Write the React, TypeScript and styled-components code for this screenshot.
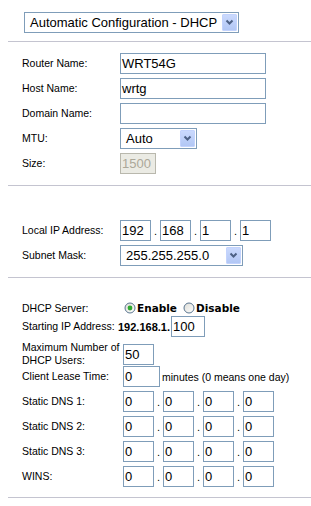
import React from 'react';
import styled, { createGlobalStyle } from 'styled-components';

const Global = createGlobalStyle`
  html, body { margin: 0; padding: 0; background: #fff; }
  body { font-family: "Liberation Sans", Arial, sans-serif; color: #000; }
`;

const Page = styled.div`
  width: 311px;
  height: 506px;
  overflow: hidden;
  background: #fff;
`;

const TopBar = styled.div`
  padding: 12px 0 8px 24px;
`;

const Divider = styled.div`
  margin-left: 8px;
  height: 1px;
  background: #c4c4d0;
`;

const Section = styled.div<{ $pt: number; $pb: number }>`
  padding: ${(p) => p.$pt}px 0 ${(p) => p.$pb}px 22px;
  display: flex;
  flex-direction: column;
`;

const Row = styled.div<{ $label: number; $h?: number; $after?: number }>`
  display: grid;
  grid-template-columns: ${(p) => p.$label}px 1fr;
  align-items: center;
  height: ${(p) => p.$h ?? 21}px;
  margin-bottom: ${(p) => p.$after ?? 4}px;
  &:last-child { margin-bottom: 0; }
`;

const Label = styled.div`
  font-size: 10.5px;
  line-height: 13px;
  white-space: nowrap;
`;

const Value = styled.div<{ $indent?: number }>`
  display: flex;
  align-items: center;
  height: 100%;
  padding-left: ${(p) => p.$indent ?? 0}px;
`;

const TextBox = styled.div<{ $w: number; $disabled?: boolean }>`
  box-sizing: border-box;
  width: ${(p) => p.$w}px;
  height: 21px;
  border: 1px solid ${(p) => (p.$disabled ? '#b9b8ad' : '#7f9db9')};
  background: ${(p) => (p.$disabled ? '#ebebe4' : '#fff')};
  color: ${(p) => (p.$disabled ? '#aca899' : '#000')};
  font-size: 13px;
  line-height: 19px;
  padding-left: 1px;
  white-space: nowrap;
  overflow: hidden;
`;

const SelectBox = styled.div<{ $w: number }>`
  box-sizing: border-box;
  position: relative;
  width: ${(p) => p.$w}px;
  height: 21px;
  border: 1px solid #7f9db9;
  background: #fff;
  font-size: 13px;
  line-height: 19px;
  padding-left: 5px;
  white-space: nowrap;
`;

const DropButton = styled.div`
  position: absolute;
  top: 1px;
  right: 1px;
  width: 15px;
  height: 17px;
  box-sizing: border-box;
  border: 1px solid #c3d3fd;
  border-radius: 1px;
  background: linear-gradient(#cad9fd, #b2c7f5);
  display: flex;
  align-items: center;
  justify-content: center;
`;

const Dot = styled.span`
  width: 9px;
  text-align: center;
  font-size: 11px;
  line-height: 21px;
  height: 21px;
  padding-top: 1px;
  box-sizing: border-box;
`;

const IpGroup = styled.div`
  display: flex;
  align-items: center;
`;

const BoldPrefix = styled.span`
  font-weight: bold;
  font-size: 11px;
  margin-right: 1px;
`;

const RadioLabel = styled.span`
  font-family: "DejaVu Sans", Verdana, sans-serif;
  font-weight: bold;
  font-size: 10.5px;
  margin-left: 1px;
  margin-right: 6px;
`;

const RadioIcon = styled.svg`
  width: 12px;
  height: 12px;
  flex: none;
`;

const Hint = styled.span`
  font-size: 10.5px;
  margin-left: 2px;
  white-space: nowrap;
`;

const Chevron = () => (
  <svg width="9" height="7" viewBox="0 0 9 7">
    <path d="M1.5 1.5 L4.5 4.5 L7.5 1.5" fill="none" stroke="#4d6185" strokeWidth="2" />
  </svg>
);

const Select = ({ w, text }: { w: number; text: string }) => (
  <SelectBox $w={w}>
    {text}
    <DropButton>
      <Chevron />
    </DropButton>
  </SelectBox>
);

const Radio = ({ checked }: { checked?: boolean }) => (
  <RadioIcon viewBox="0 0 12 12">
    <defs>
      <linearGradient id={checked ? 'rg1' : 'rg2'} x1="0" y1="0" x2="1" y2="1">
        <stop offset="0" stopColor="#dcdcd6" />
        <stop offset="1" stopColor="#ffffff" />
      </linearGradient>
    </defs>
    <circle cx="6" cy="6" r="5" fill={`url(#${checked ? 'rg1' : 'rg2'})`} stroke="#5a7590" strokeWidth="1" />
    {checked && <circle cx="6" cy="6" r="2.4" fill="#2faa2f" />}
  </RadioIcon>
);

const Ip = ({ parts }: { parts: string[] }) => (
  <IpGroup>
    {parts.map((p, i) => (
      <React.Fragment key={i}>
        {i > 0 && <Dot>.</Dot>}
        <TextBox $w={31}>{p}</TextBox>
      </React.Fragment>
    ))}
  </IpGroup>
);

export default function App() {
  return (
    <Page>
      <Global />
      <TopBar>
        <Select w={215} text="Automatic Configuration - DHCP" />
      </TopBar>
      <Divider />
      <Section $pt={11} $pb={11}>
        <Row $label={98}>
          <Label>Router Name:</Label>
          <Value><TextBox $w={146}>WRT54G</TextBox></Value>
        </Row>
        <Row $label={98}>
          <Label>Host Name:</Label>
          <Value><TextBox $w={146}>wrtg</TextBox></Value>
        </Row>
        <Row $label={98}>
          <Label>Domain Name:</Label>
          <Value><TextBox $w={146}></TextBox></Value>
        </Row>
        <Row $label={98}>
          <Label>MTU:</Label>
          <Value><Select w={77} text="Auto" /></Value>
        </Row>
        <Row $label={98}>
          <Label>Size:</Label>
          <Value><TextBox $w={36} $disabled>1500</TextBox></Value>
        </Row>
      </Section>
      <Divider />
      <Section $pt={34} $pb={11}>
        <Row $label={98}>
          <Label>Local IP Address:</Label>
          <Value><Ip parts={['192', '168', '1', '1']} /></Value>
        </Row>
        <Row $label={98}>
          <Label>Subnet Mask:</Label>
          <Value><Select w={123} text="255.255.255.0" /></Value>
        </Row>
      </Section>
      <Divider />
      <Section $pt={22} $pb={10}>
        <Row $label={96} $h={16} $after={0}>
          <Label>DHCP Server:</Label>
          <Value $indent={6}>
            <Radio checked />
            <RadioLabel>Enable</RadioLabel>
            <Radio />
            <RadioLabel>Disable</RadioLabel>
          </Value>
        </Row>
        <Row $label={96}>
          <Label>Starting IP Address:</Label>
          <Value>
            <BoldPrefix>192.168.1.</BoldPrefix>
            <TextBox $w={34}>100</TextBox>
          </Value>
        </Row>
        <Row $label={96}>
          <Label>Maximum Number of<br />DHCP Users:</Label>
          <Value $indent={5}><TextBox $w={31}>50</TextBox></Value>
        </Row>
        <Row $label={96}>
          <Label>Client Lease Time:</Label>
          <Value $indent={5}>
            <TextBox $w={37}>0</TextBox>
            <Hint>minutes (0 means one day)</Hint>
          </Value>
        </Row>
        <Row $label={96}>
          <Label>Static DNS 1:</Label>
          <Value $indent={5}><Ip parts={['0', '0', '0', '0']} /></Value>
        </Row>
        <Row $label={96}>
          <Label>Static DNS 2:</Label>
          <Value $indent={5}><Ip parts={['0', '0', '0', '0']} /></Value>
        </Row>
        <Row $label={96}>
          <Label>Static DNS 3:</Label>
          <Value $indent={5}><Ip parts={['0', '0', '0', '0']} /></Value>
        </Row>
        <Row $label={96}>
          <Label>WINS:</Label>
          <Value $indent={5}><Ip parts={['0', '0', '0', '0']} /></Value>
        </Row>
      </Section>
      <Divider />
    </Page>
  );
}
